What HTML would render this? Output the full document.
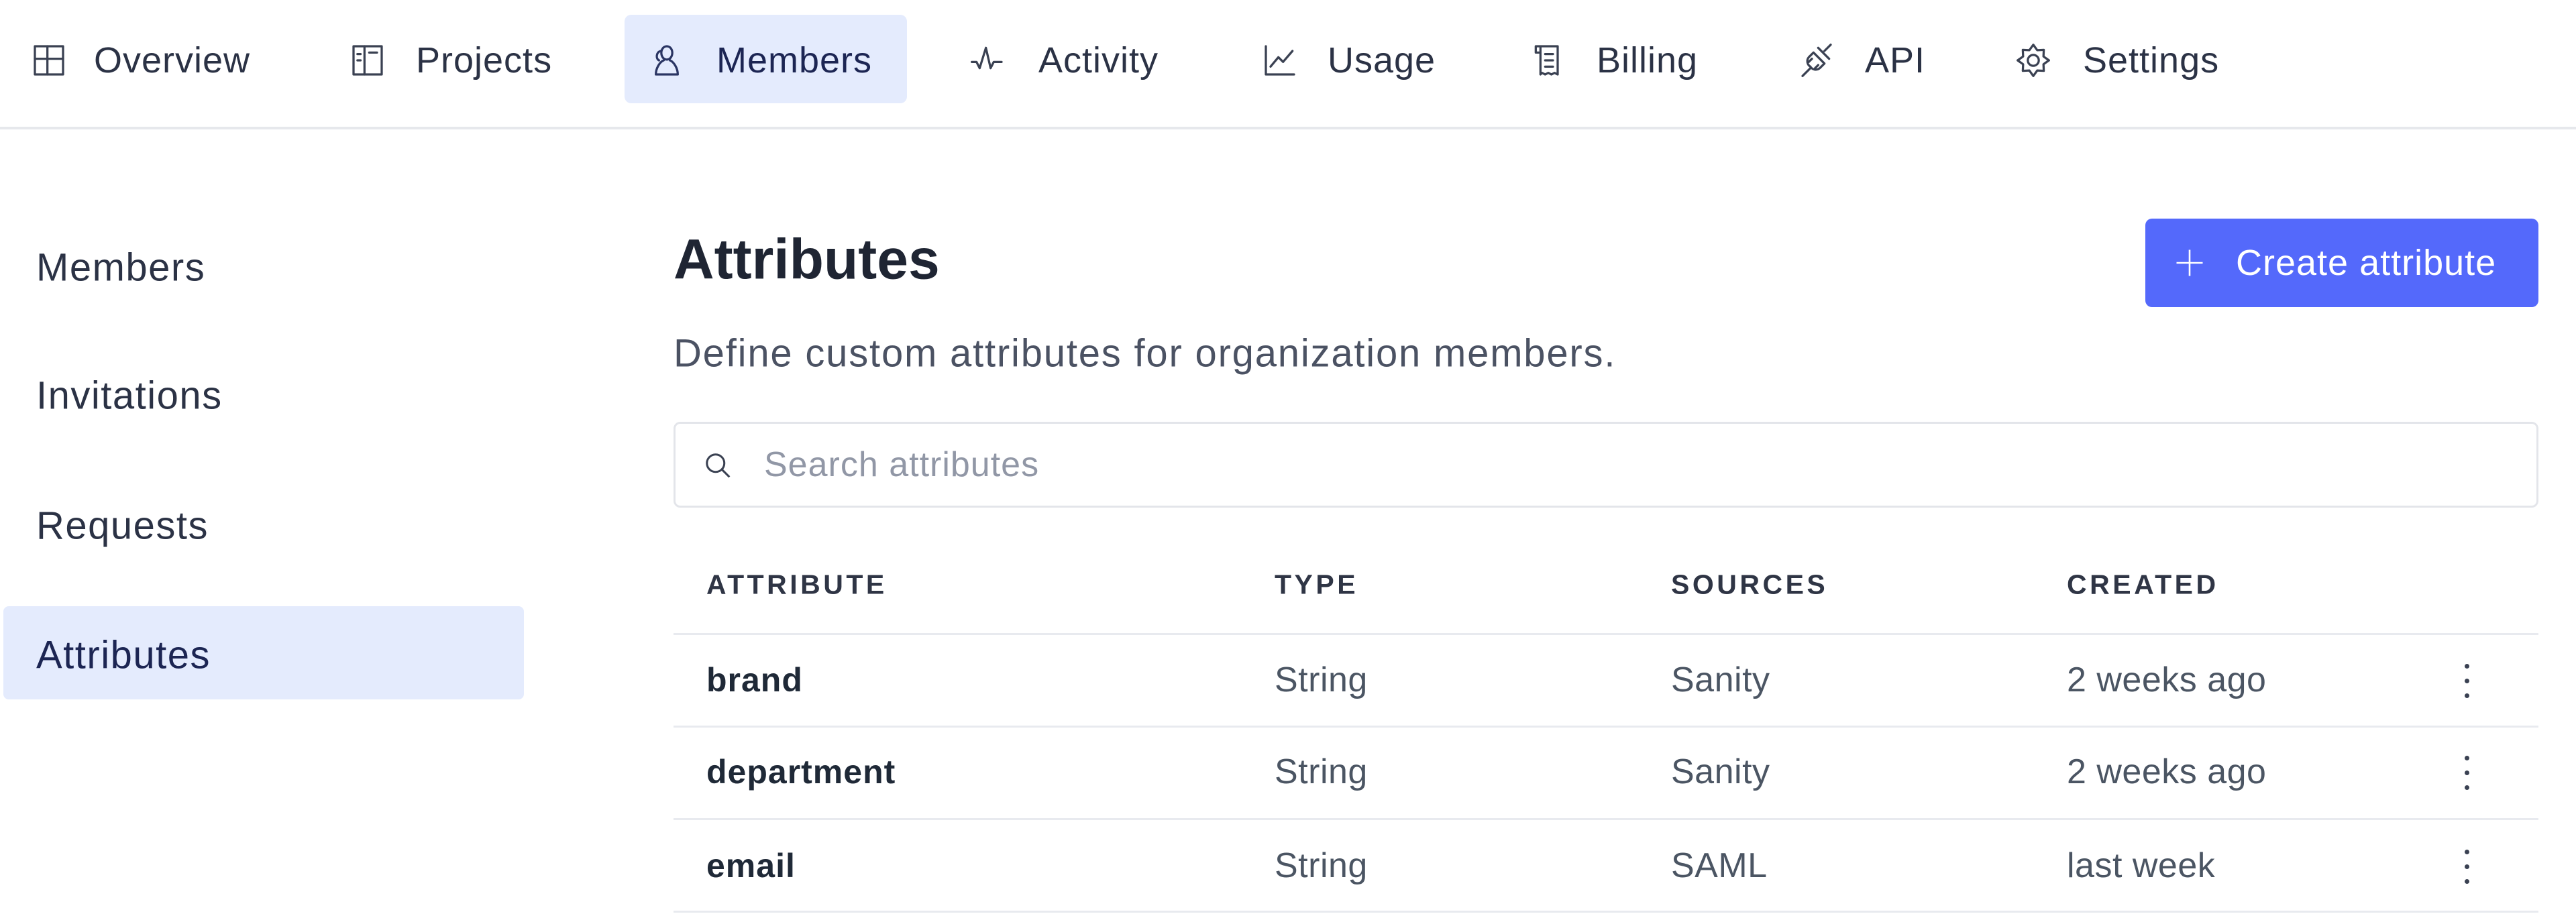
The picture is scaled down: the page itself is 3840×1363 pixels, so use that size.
<!DOCTYPE html>
<html><head><meta charset="utf-8"><style>
*{margin:0;padding:0;box-sizing:border-box}
body{width:3840px;height:1363px;background:#fff;font-family:"Liberation Sans",sans-serif;position:relative;overflow:hidden;color:#1f2937}
.a{position:absolute;white-space:nowrap}
.nav{font-size:54px;letter-spacing:1px;color:#2b3245;line-height:1;transform:translateY(-50%);top:90px}
.ic{position:absolute;top:62px;width:56px;height:56px}
.ic svg{width:56px;height:56px;fill:none;stroke:#3a4152;stroke-width:1.4;stroke-linejoin:round;stroke-linecap:round}
.side{font-size:58px;letter-spacing:1.5px;color:#2b3245;left:54px;transform:translateY(-50%)}
.th{font-size:41px;font-weight:bold;letter-spacing:4.5px;color:#2f3545;top:872px;transform:translateY(-50%)}
.td{font-size:52px;letter-spacing:.5px;color:#4b5563;transform:translateY(-50%)}
.nm{color:#1f2937;font-weight:bold;font-size:50px;letter-spacing:1px}
.hr{position:absolute;left:1004px;width:2780px;height:3px;background:#e8eaef}
.kb{position:absolute;width:8px;height:52px;left:3674px}
.kb i{display:block;width:7px;height:7px;border-radius:50%;background:#3a4152;margin-bottom:15px}
</style></head><body>
<div class="a" style="left:931px;top:22px;width:421px;height:132px;background:#e4ebfd;border-radius:10px"></div>
<div class="a" style="left:0;top:189px;width:3840px;height:4px;background:#e6e8ec"></div>

<div class="ic" style="left:45px"><svg viewBox="0 0 24 24"><rect x="3" y="3" width="18" height="18"/><path d="M3 11h18M11 11v10M11 3v8"/></svg></div>
<div class="a nav" style="left:140px">Overview</div>
<div class="ic" style="left:520px"><svg viewBox="0 0 24 24"><rect x="3" y="3" width="18" height="18"/><path d="M10 3v18M5.5 8h2M5.5 12h2M13 7h5"/></svg></div>
<div class="a nav" style="left:620px">Projects</div>
<div class="ic" style="left:966px"><svg viewBox="0 0 24 24" style="stroke:#2a3563"><path d="M12 3c2 0 3.5 1.8 3.5 4.2 0 2.4-1.5 4.3-3.5 4.3S8.5 9.6 8.5 7.2 10 3 12 3zM5 21c0-4 2.5-8 5-9M19 21c0-4-2.5-8-5-9M5 21h14"/><path d="M7 12c-2-1-2-5 1-6"/></svg></div>
<div class="a nav" style="left:1068px;color:#1c2553">Members</div>
<div class="ic" style="left:1444px"><svg viewBox="0 0 24 24"><path d="M2 13h3l2 4 4-13 3 13 2-4h5"/></svg></div>
<div class="a nav" style="left:1548px">Activity</div>
<div class="ic" style="left:1880px"><svg viewBox="0 0 24 24"><path d="M3 3v18h18M6 16l5-6 3 3 6-7"/></svg></div>
<div class="a nav" style="left:1979px">Usage</div>
<div class="ic" style="left:2280px"><svg viewBox="0 0 24 24"><path d="M7 3h11v18l-2-1-2 1-2-1-2 1-2-1-1 1V3zM4 3h3v4H4zM10 8h5M10 12h5M10 16h5"/></svg></div>
<div class="a nav" style="left:2380px">Billing</div>
<div class="ic" style="left:2680px"><svg viewBox="0 0 24 24"><path d="M3 22l5-5M21 2l-4 4M10 7l7 7-3 3a4 4 0 0 1-6-1 4 4 0 0 1-1-6l3-3zM13 4l7 7M9 11l-2 2M13 15l-2 2"/></svg></div>
<div class="a nav" style="left:2780px">API</div>
<div class="ic" style="left:3003px"><svg viewBox="0 0 24 24"><path d="M12 2l2.5 3.5 4.2-.2-.2 4.2L22 12l-3.5 2.5.2 4.2-4.2-.2L12 22l-2.5-3.5-4.2.2.2-4.2L2 12l3.5-2.5-.2-4.2 4.2.2z"/><circle cx="12" cy="12" r="3.5"/></svg></div>
<div class="a nav" style="left:3105px">Settings</div>

<div class="a" style="left:5px;top:904px;width:776px;height:139px;background:#e4ebfd;border-radius:8px"></div>
<div class="a side" style="top:399px">Members</div>
<div class="a side" style="top:590px">Invitations</div>
<div class="a side" style="top:784px">Requests</div>
<div class="a side" style="top:977px;color:#1c2553">Attributes</div>

<div class="a" style="left:1004px;top:387px;transform:translateY(-50%);font-size:84px;font-weight:bold;color:#1f2533">Attributes</div>
<div class="a" style="left:3198px;top:326px;width:586px;height:132px;background:#5469fb;border-radius:10px"></div>
<svg class="a" style="left:3238px;top:366px" width="52" height="52" viewBox="0 0 24 24"><path d="M12 3v18M3 12h18" stroke="#fff" stroke-width="1.2" fill="none"/></svg>
<div class="a" style="left:3333px;top:392px;transform:translateY(-50%);font-size:54px;letter-spacing:1px;color:#fff">Create attribute</div>
<div class="a" style="left:1004px;top:527px;transform:translateY(-50%);font-size:58px;letter-spacing:1.8px;color:#4b5263">Define custom attributes for organization members.</div>

<div class="a" style="left:1004px;top:629px;width:2780px;height:128px;border:3px solid #e3e5ea;border-radius:10px"></div>
<svg class="a" style="left:1044px;top:668px" width="52" height="52" viewBox="0 0 24 24"><circle cx="10.5" cy="10.5" r="6" stroke="#3a4152" stroke-width="1.4" fill="none"/><path d="M15 15l5 5" stroke="#3a4152" stroke-width="1.4"/></svg>
<div class="a" style="left:1139px;top:693px;transform:translateY(-50%);font-size:52px;letter-spacing:1px;color:#9197a6">Search attributes</div>

<div class="a th" style="left:1053px">ATTRIBUTE</div>
<div class="a th" style="left:1900px">TYPE</div>
<div class="a th" style="left:2491px">SOURCES</div>
<div class="a th" style="left:3081px">CREATED</div>
<div class="hr" style="top:944px"></div>

<div class="a td nm" style="left:1053px;top:1014px">brand</div>
<div class="a td" style="left:1900px;top:1014px">String</div>
<div class="a td" style="left:2491px;top:1014px">Sanity</div>
<div class="a td" style="left:3081px;top:1014px">2 weeks ago</div>
<div class="kb" style="top:990px"><i></i><i></i><i></i></div>
<div class="hr" style="top:1082px"></div>

<div class="a td nm" style="left:1053px;top:1151px">department</div>
<div class="a td" style="left:1900px;top:1151px">String</div>
<div class="a td" style="left:2491px;top:1151px">Sanity</div>
<div class="a td" style="left:3081px;top:1151px">2 weeks ago</div>
<div class="kb" style="top:1127px"><i></i><i></i><i></i></div>
<div class="hr" style="top:1220px"></div>

<div class="a td nm" style="left:1053px;top:1291px">email</div>
<div class="a td" style="left:1900px;top:1291px">String</div>
<div class="a td" style="left:2491px;top:1291px">SAML</div>
<div class="a td" style="left:3081px;top:1291px">last week</div>
<div class="kb" style="top:1267px"><i></i><i></i><i></i></div>
<div class="hr" style="top:1358px"></div>
</body></html>
